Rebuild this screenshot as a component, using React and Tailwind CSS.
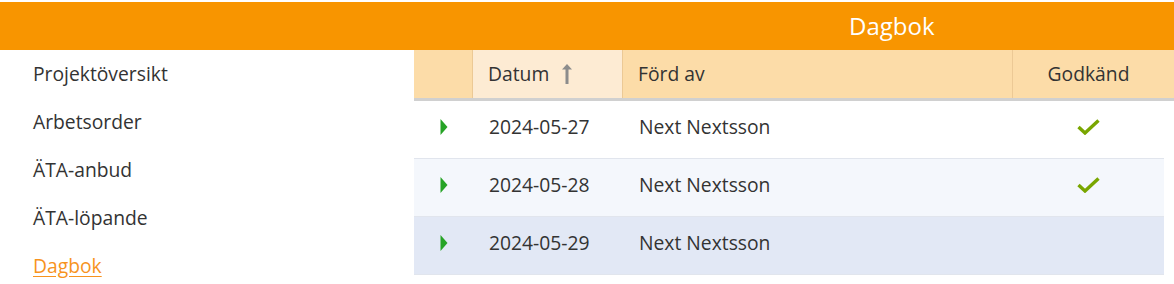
import React from 'react';

const menu = ['Projektöversikt', 'Arbetsorder', 'ÄTA-anbud', 'ÄTA-löpande', 'Dagbok'];

const rows = [
  { datum: '2024-05-27', av: 'Next Nextsson', ok: true, bg: 'bg-white' },
  { datum: '2024-05-28', av: 'Next Nextsson', ok: true, bg: 'bg-[#f4f7fc]' },
  { datum: '2024-05-29', av: 'Next Nextsson', ok: false, bg: 'bg-[#e2e8f5]' },
];

const SortUp = () => (
  <svg width="10" height="22" viewBox="0 0 10 22" className="ml-[13px]">
    <path d="M0 6.5 L5 1 L10 6.5 Z" fill="#8c8c8c" />
    <rect x="3.5" y="5" width="3" height="16" fill="#8c8c8c" />
  </svg>
);

const Caret = () => (
  <svg width="8" height="16" viewBox="0 0 8 16">
    <path d="M0.5 0 L7.5 8 L0.5 16 Z" fill="#26a326" />
  </svg>
);

const Check = () => (
  <svg width="23" height="16" viewBox="0 0 23 16">
    <path d="M1.5 8 L8 14 L21.5 1.5" fill="none" stroke="#79a600" strokeWidth="3.4" />
  </svg>
);

export default function App() {
  return (
    <div
      className="w-[1174px] h-[284px] bg-white overflow-hidden pt-[2px] text-[#333]"
      style={{ fontFamily: '"Open Sans", "Noto Sans", sans-serif' }}
    >
      <div className="h-[48px] bg-[#f89500] flex items-center pl-[849px] text-white text-[24px]">
        Dagbok
      </div>
      <div className="flex">
        <nav className="w-[414px] flex flex-col pl-[33px]">
          {menu.map(item => (
            <a
              key={item}
              href="#"
              className={
                'h-[48px] flex items-center text-[19.3px] ' +
                (item === 'Dagbok' ? 'text-[#f7931e] underline underline-offset-[3px]' : 'text-[#333]')
              }
            >
              {item}
            </a>
          ))}
        </nav>
        <div className="w-[760px]">
          <div className="grid grid-cols-[59px_150px_390px_161px] h-[48px] bg-[#fcdca8] text-[19.3px] border-b-[3px] border-[#d0d0d0] box-content">
            <div className="border-r border-[#ecc995]" />
            <div className="bg-[#fdebd3] border-r border-[#ecc995] flex items-center pl-[15px]">
              Datum
              <SortUp />
            </div>
            <div className="border-r border-[#ecc995] flex items-center pl-[15px]">Förd av</div>
            <div className="flex items-center justify-center pr-[10px]">Godkänd</div>
          </div>
          {rows.map(r => (
            <div
              key={r.datum}
              className={'grid grid-cols-[59px_150px_390px_151px] w-[750px] h-[58px] pb-[5px] border-b border-[#e1e5ed] text-[19.3px] ' + r.bg}
            >
              <div className="flex items-center justify-center pl-[1px]">
                <Caret />
              </div>
              <div className="flex items-center pl-[16px]">{r.datum}</div>
              <div className="flex items-center pl-[16px]">{r.av}</div>
              <div className="flex items-center justify-center">{r.ok && <Check />}</div>
            </div>
          ))}
        </div>
      </div>
    </div>
  );
}
